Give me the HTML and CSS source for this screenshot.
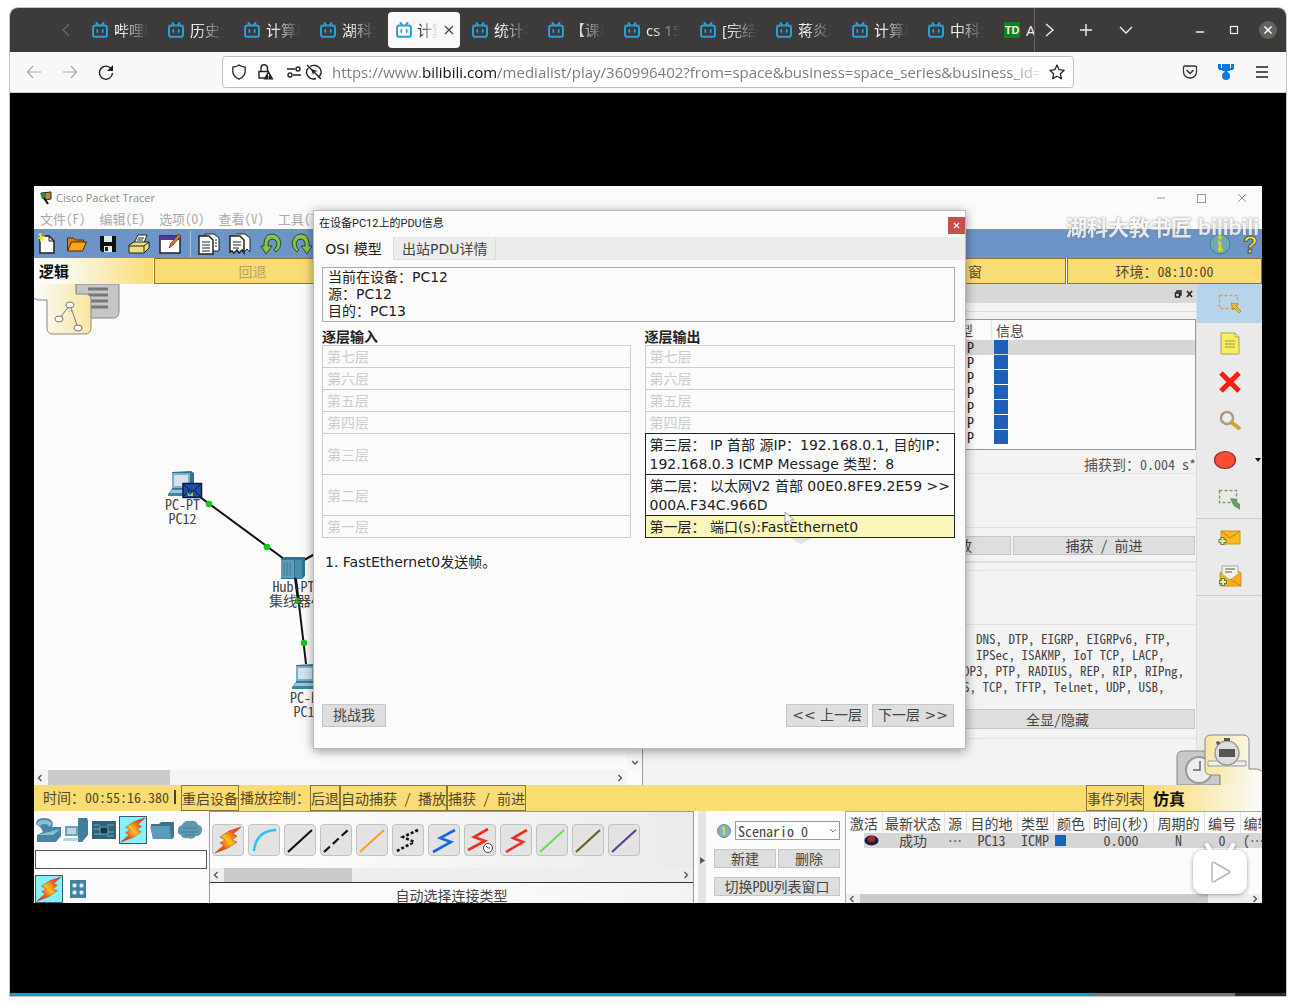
FILE: index.html
```html
<!DOCTYPE html>
<html lang="zh-CN">
<head>
<meta charset="utf-8">
<title>bilibili</title>
<link rel="stylesheet" href="styles.css">
</head>
<body>
<svg class="defs" width="0" height="0" aria-hidden="true">
  <defs>
    <symbol id="tv" viewBox="0 0 16 16"><path d="M4.5.8 6 3M11.5.8 10 3" stroke="#2b9fd9" stroke-width="2" stroke-linecap="round"/><rect x="1" y="3.4" width="14" height="11.4" rx="2.4" fill="none" stroke="#2b9fd9" stroke-width="2"/><path d="M5.3 8v2M10.7 8v2" stroke="#2b9fd9" stroke-width="1.8" stroke-linecap="round"/></symbol>
    <linearGradient id="fire" x1="0" y1="1" x2="1" y2="0"><stop offset="0" stop-color="#d91f10"/><stop offset=".3" stop-color="#f4661a"/><stop offset=".5" stop-color="#ffc21a"/><stop offset=".7" stop-color="#f4661a"/><stop offset="1" stop-color="#d91f10"/></linearGradient>
    <symbol id="bolt" viewBox="0 0 28 28"><path d="M27 1 15 5 6 11l5 3-5 3 4 2-9 8 13-5 9-6-5-2 5-4-4-2z" fill="url(#fire)" stroke="#a5320f" stroke-width=".5"/></symbol>
    <symbol id="pc" viewBox="0 0 28 26"><path d="M4 1 23 0 26 2v16H4z" fill="#2b7590"/><rect x="4" y="2" width="18" height="15" fill="#7fb0c6"/><rect x="6" y="4" width="14" height="11" fill="#d3e3ec"/><path d="M4 18h22l-1 7H0v-2z" fill="#3d86a3"/><path d="M4 19h20l-2 3H1z" fill="#9cc6d8"/></symbol>
    <linearGradient id="cream" x1="0" x2="1"><stop offset="0" stop-color="#fbfbfb"/><stop offset="1" stop-color="#f8e6a0"/></linearGradient>
    <linearGradient id="cream2" x1="0" x2="1"><stop offset="0" stop-color="#f8e6a0"/><stop offset="1" stop-color="#fbfbfb"/></linearGradient>
  </defs>
</svg>
<div class="browser">
  <nav class="tabs">
    <svg class="tabs-prev" width="10" height="14" viewBox="0 0 10 14"><path d="M8 1 2 7l6 6" fill="none" stroke="#6b6a68" stroke-width="1.3"/></svg>
    <button class="tab"><svg width="16" height="16"><use href="#tv"/></svg><span>哔哩哔</span></button>
    <button class="tab"><svg width="16" height="16"><use href="#tv"/></svg><span>历史记</span></button>
    <button class="tab"><svg width="16" height="16"><use href="#tv"/></svg><span>计算机</span></button>
    <button class="tab"><svg width="16" height="16"><use href="#tv"/></svg><span>湖科大</span></button>
    <button class="tab active"><svg width="16" height="16"><use href="#tv"/></svg><span>计算</span><svg width="10" height="10" viewBox="0 0 10 10"><path d="m1 1 8 8M9 1 1 9" stroke="#444" stroke-width="1.2"/></svg></button>
    <button class="tab"><svg width="16" height="16"><use href="#tv"/></svg><span>统计学</span></button>
    <button class="tab"><svg width="16" height="16"><use href="#tv"/></svg><span>【课程</span></button>
    <button class="tab"><svg width="16" height="16"><use href="#tv"/></svg><span>cs 15</span></button>
    <button class="tab"><svg width="16" height="16"><use href="#tv"/></svg><span>[完结</span></button>
    <button class="tab"><svg width="16" height="16"><use href="#tv"/></svg><span>蒋炎岩</span></button>
    <button class="tab"><svg width="16" height="16"><use href="#tv"/></svg><span>计算机</span></button>
    <button class="tab"><svg width="16" height="16"><use href="#tv"/></svg><span>中科大</span></button>
    <button class="tab cut"><b class="td">TD</b><i>A</i></button>
    <div class="tab-tools">
      <svg width="14" height="16" viewBox="0 0 14 16"><path d="m3 2 7 6-7 6" fill="none" stroke="#eee" stroke-width="1.4"/></svg>
      <svg width="14" height="14" viewBox="0 0 14 14"><path d="M7 1v12M1 7h12" stroke="#eee" stroke-width="1.4"/></svg>
      <svg width="14" height="14" viewBox="0 0 14 14"><path d="m1 4 6 6 6-6" fill="none" stroke="#eee" stroke-width="1.4"/></svg>
    </div>
    <div class="win-tools">
      <svg width="18" height="18" viewBox="0 0 18 18"><path d="M5 11h8" stroke="#eee" stroke-width="1.4"/></svg>
      <svg width="18" height="18" viewBox="0 0 18 18"><rect x="5.500" y="5.500" width="7" height="7" fill="none" stroke="#eee" stroke-width="1.2"/></svg>
      <svg width="18" height="18" viewBox="0 0 18 18"><circle cx="9" cy="9" r="9" fill="#63625f"/><path d="m5.500 5.500 7 7m0-7-7 7" stroke="#fff" stroke-width="1.5"/></svg>
    </div>
  </nav>
  <div class="navbar">
    <div class="nav-buttons">
      <svg width="16" height="16" viewBox="0 0 16 16"><path d="M15 8H1.500M7 2 1.500 8 7 14" fill="none" stroke="#aaa" stroke-width="1.2"/></svg>
      <svg width="16" height="16" viewBox="0 0 16 16"><path d="M1 8h13.500M9 2l5.500 6L9 14" fill="none" stroke="#aaa" stroke-width="1.2"/></svg>
      <svg width="16" height="16" viewBox="0 0 16 16"><path d="M13 4.500A6.500 6.500 0 1 0 14.500 9" fill="none" stroke="#222" stroke-width="1.4"/><path d="M15 1v6H9z" fill="#222"/></svg>
    </div>
    <div class="urlbar">
      <svg width="16" height="16" viewBox="0 0 16 16"><path d="M8 1c2 1.500 4 2 6.200 2.200V7c0 3.800-2.200 6.500-6.200 8.200C4 13.500 1.800 10.800 1.800 7V3.200C4 3 6 2.500 8 1z" fill="none" stroke="#222" stroke-width="1.300"/></svg>
      <svg class="lock" width="17" height="16" viewBox="0 0 17 16"><path d="M4 7V4a3 3 0 0 1 6.500 0v3M2 14.500V7.500h10" fill="none" stroke="#222" stroke-width="1.400"/><path d="M2 14h6" stroke="#222" stroke-width="1.400"/><path d="m11.500 6.500 5 9h-10z" fill="#222"/><path d="M11.500 10v2.500M11.500 13.500v1" stroke="#fff"/></svg>
      <svg class="perm" width="16" height="16" viewBox="0 0 16 16"><path d="M1 5h8M7 11h8" stroke="#222" stroke-width="1.400"/><circle cx="12" cy="5" r="2" fill="none" stroke="#222" stroke-width="1.400"/><circle cx="4" cy="11" r="2" fill="none" stroke="#222" stroke-width="1.400"/></svg>
      <svg width="18" height="16" viewBox="0 0 18 16"><path d="M5 2.500a7 6.500 0 0 1 8 11M3.500 4a7 6.500 0 0 0 7.500 10.500M2 1l14 14" fill="none" stroke="#222" stroke-width="1.400"/><path d="m6 5 7 2-4 1-1 3z" fill="#222"/></svg>
      <div class="url">https://www.<b>bilibili.com</b>/medialist/play/360996402?from=space&amp;business=space_series&amp;business_id=</div>
      <svg width="16" height="16" viewBox="0 0 16 16"><path d="m8 1 2.100 4.700 5.100.6-3.800 3.500 1 5L8 12.300l-4.400 2.500 1-5L.8 6.300l5.100-.6z" fill="none" stroke="#222" stroke-width="1.300" stroke-linejoin="round"/></svg>
    </div>
    <div class="nav-right">
      <svg width="16" height="16" viewBox="0 0 16 16"><path d="M3 2h10q1.500 0 1.500 1.500V8a6.500 6 0 0 1-13 0V3.500Q1.500 2 3 2z" fill="none" stroke="#333" stroke-width="1.300"/><path d="m4.500 6 3.500 3.500L11.500 6" fill="none" stroke="#333" stroke-width="1.500"/></svg>
      <svg width="16" height="16" viewBox="0 0 16 16"><path d="M0 0h3v5H0zM4 0h8v7H9.500v2h-3V7H4zM13 0h3v5h-3z" fill="#0b7bdc"/><path d="M1 4h14v2H1z" fill="#0b7bdc"/><circle cx="8" cy="12" r="4" fill="#0b7bdc"/></svg>
      <svg width="16" height="16" viewBox="0 0 16 16"><path d="M2 3h12M2 8h12M2 13h12" stroke="#222" stroke-width="1.400"/></svg>
    </div>
  </div>

  <main class="video">
    <div class="app">
      <header class="titlebar">
        <svg width="14" height="14" viewBox="0 0 14 14"><path d="M2 2 12 1v7l-6 1z" fill="#c08a2a" stroke="#222"/><path d="M1 2h6v6H3z" fill="#2f8b3a"/><path d="m5 7 4 6" stroke="#111" stroke-width="2"/></svg>
        <span>Cisco Packet Tracer</span>
        <svg class="winctl" width="92" height="10" viewBox="0 0 92 10"><path d="M1 5h8M82 1l8 8M90 1l-8 8" stroke="#999"/><rect x="41.500" y="1.500" width="8" height="8" fill="none" stroke="#999"/></svg>
      </header>
      <div class="menu"><a href="#f">文件(F)</a><a href="#e">编辑(E)</a><a href="#o">选项(O)</a><a href="#v">查看(V)</a><a href="#t">工具(T)</a></div>
      <div class="toolbar">
        <svg width="22" height="22" viewBox="0 0 18 22"><path d="M3 3h9l5 5v12H3z" fill="#fff" stroke="#222" stroke-width="1.500"/><path d="M12 3v5h5" fill="none" stroke="#222"/><path d="m4 0 1 3 3-1-2 3 2 3-3-1-2 2V6L0 5l3-1-2-3z" fill="#fbe33c"/></svg>
        <svg width="22" height="22" viewBox="0 0 21 22"><path d="M1 18V5h6l2 2h8v3" fill="#d98010" stroke="#4b2b08"/><path d="m1 18 4-9h15l-4 9z" fill="#fba51e" stroke="#4b2b08"/></svg>
        <svg width="22" height="22" viewBox="0 0 18 22"><path d="M1 3h16v16H3l-2-2z" fill="#111"/><path d="M5 3h8v6H5z" fill="#dfe6ee"/><path d="M5 13h8v6H5z" fill="#eee"/><path d="M6 14h3v4H6z" fill="#222"/></svg>
        <svg width="22" height="22" viewBox="0 0 22 22"><path d="m6 10 4-8h9l-3 8z" fill="#fff" stroke="#222"/><path d="m1 12 5-3h15v6l-5 5H1z" fill="#e9e27c" stroke="#222"/><path d="M1 13h15v6M16 13l5-4M10 5h6M9 7h6" stroke="#222" fill="none"/></svg>
        <svg width="22" height="22" viewBox="0 0 22 22"><rect x="1" y="3" width="20" height="17" fill="#fff" stroke="#222" stroke-width="1.500"/><path d="M1 3h20v4H1z" fill="#51389b"/><path d="m10 15 2-5 8-9 2 2-8 9z" fill="#d77a2b" stroke="#5a2c10" stroke-width=".7"/></svg>
        <i class="tsep"></i>
        <svg width="22" height="22" viewBox="0 0 22 22"><path d="M7 1h9l5 4v13H7z" fill="#fff" stroke="#222"/><path d="M1 3h10l4 4v14H1z" fill="#fff" stroke="#222" stroke-width="1.500"/><path d="M4 9h8M4 12h8M4 15h8M4 18h8M17 7h2M17 10h2M17 13h2" stroke="#222"/></svg>
        <svg width="22" height="22" viewBox="0 0 22 22"><path d="M7 1h9l5 4v14l-3-3-3 3" fill="#fff" stroke="#222"/><path d="M1 3h10l4 4v13l-2-3-3 3-2-3-3 3-2-2-2 1z" fill="#fff" stroke="#222" stroke-width="1.500"/><path d="M4 9h8M4 12h8M4 15h6" stroke="#222"/></svg>
        <svg width="22" height="22" viewBox="0 0 22 22"><path d="M1 13h3V10q1-9 8-9t9 9q0 5-5 9l-2-2q3-3 3-7-1-4-5-4-3 0-4 4v3h4l-6 8z" fill="#8cc152" stroke="#234d1c"/></svg>
        <svg width="22" height="22" viewBox="0 0 22 22"><path d="M21 13h-3V10q-1-9-8-9T1 10q0 5 5 9l2-2q-3-3-3-7 1-4 5-4 3 0 4 4v3h-4l6 8z" fill="#8cc152" stroke="#234d1c"/></svg>
      </div>
      <div class="locbar"><strong>逻辑</strong><button class="dim">回退</button><button aria-label="bar"></button><button>窗</button><button>环境：08:10:00</button></div>

      <div class="work">
        <section class="canvas">
          <svg class="corner" width="90" height="54" viewBox="0 0 90 54"><path d="M42 0h43v28q0 6-6 6H42z" fill="#c6c6c6" stroke="#888"/><path d="M54 5h20M54 11h20M54 17h20M54 23h20" stroke="#777" stroke-width="3"/><path d="M0 0h42v10h9q6 0 6 6v28q0 6-6 6H19q-6 0-6-6V16H4l-4-2z" fill="url(#cream)"/><path d="M0 14q2 2 4 2h9v28q0 6 6 6h32q6 0 6-6V16q0-6-6-6h-9V0" fill="none" stroke="#888"/><path d="m25 35 11-14 8 23" fill="none" stroke="#777"/><g fill="#fff" stroke="#777"><ellipse cx="36" cy="21" rx="4" ry="3"/><ellipse cx="25" cy="35" rx="4" ry="3"/><ellipse cx="44" cy="44" rx="4" ry="3"/></g></svg>
          <svg class="links" width="300" height="440" viewBox="34 284 300 440">
            <path d="m200 497 84 62M304 560l20-11M295 570l11 94" stroke="#111" stroke-width="2" fill="none"/>
            <use href="#pc" x="168" y="471" width="28" height="26"/><rect x="183" y="483.500" width="18.500" height="14" fill="#1c4fa6" stroke="#111a33" stroke-width="1.500"/><path d="m183 484 9 8 9-8M183 497l7-7M201 497l-7-7" fill="none" stroke="#0c1a3f"/><path d="m187 492 3 3 3-3v4h-5z" fill="#b7c92b"/>
            <path d="m281 559 4-2h20v19l-3 3h-21z" fill="#2b7590"/><path d="M281 560h13v18h-13z" fill="#5f9dbb"/><path d="M295 560h7v18h-7z" fill="#4b8dac"/><path d="M284 562v14M287 562v14M290 562v14" stroke="#3b7896"/>
            <path d="m295 578 3 23" stroke="#111" stroke-width="2"/>
            <use href="#pc" x="292" y="664" width="28" height="26"/>
            <g fill="#12c81a"><circle cx="209" cy="504" r="3.300"/><circle cx="267" cy="547" r="3.300"/><circle cx="298" cy="601" r="3.300"/><circle cx="304" cy="643" r="3.300"/></g>
          </svg>
          <div class="node n1">PC-PT<br>PC12</div>
          <div class="node n2">Hub-PT<br>集线器4</div>
          <div class="node n3">PC-PT<br>PC13</div>
          <div class="vscroll"><svg width="8" height="6" viewBox="0 0 8 6"><path d="m1 1 3 3 3-3" fill="none" stroke="#555" stroke-width="1.400"/></svg></div>
          <div class="hscroll"><svg width="6" height="8" viewBox="0 0 6 8"><path d="M4.500 1 1.500 4l3 3" fill="none" stroke="#555" stroke-width="1.400"/></svg><i></i><svg width="6" height="8" viewBox="0 0 6 8"><path d="m1.500 1 3 3-3 3" fill="none" stroke="#555" stroke-width="1.400"/></svg></div>
        </section>
        <section class="panel">
          <div class="phead"><svg width="20" height="8" viewBox="0 0 20 8"><path d="M1.500 3h4v4h-4zM3 3V1h4v4H6" fill="none" stroke="#222" stroke-width="1.400"/><path d="m13 1 5 6M18 1l-5 6" stroke="#222" stroke-width="1.600"/></svg></div>
          <div class="pgap"></div>
          <table class="events">
            <thead><tr><th>型</th><th>信息</th></tr></thead>
            <tbody>
              <tr class="sel"><td>P</td><td><i></i></td></tr><tr><td>P</td><td><i></i></td></tr><tr><td>P</td><td><i></i></td></tr><tr><td>P</td><td><i></i></td></tr><tr><td>P</td><td><i></i></td></tr><tr><td>P</td><td><i></i></td></tr><tr><td>P</td><td><i></i></td></tr>
            </tbody>
          </table>
          <div class="captured">捕获到：0.004 s*</div>
          <div class="pspace"></div>
          <div class="play"><button>放</button><button>捕获 / 前进</button></div>
          <div class="pspace two"></div>
          <pre class="protocols">  DNS, DTP, EIGRP, EIGRPv6, FTP,
  IPSec, ISAKMP, IoT TCP, LACP,
DP3, PTP, RADIUS, REP, RIP, RIPng,
S, TCP, TFTP, Telnet, UDP, USB,</pre>
          <button class="showall">全显/隐藏</button>
          <div class="pend"></div>
        </section>
        <aside class="side">
          <div class="cell on"><svg width="24" height="22" viewBox="0 0 24 22"><rect x="1.500" y="2.500" width="18" height="13" fill="none" stroke="#d9a23a" stroke-width="1.500" stroke-dasharray="3 2"/><path d="m13 10 7 1-2 2 5 5-2 2-5-5-1 2z" fill="#edb92e" stroke="#a77a1e" stroke-width=".7"/></svg></div>
          <div class="cell"><svg width="24" height="24" viewBox="0 0 24 24"><path d="M3 2h14l4 4v17H3z" fill="#f6ee5e" stroke="#aaa067"/><path d="M17 2v4h4z" fill="#fffde0" stroke="#aaa067"/><path d="M7 10h10M7 13h10M7 16h10" stroke="#9a9448"/></svg></div>
          <div class="cell"><svg width="24" height="24" viewBox="0 0 24 24"><path d="m3 3 18 18M21 3 3 21" stroke="#fa1d0b" stroke-width="5"/></svg></div>
          <div class="cell"><svg width="24" height="24" viewBox="0 0 24 24"><circle cx="9" cy="9" r="6" fill="#eee" stroke="#b09a86" stroke-width="2.500"/><path d="m13 13 9 7" stroke="#cba43c" stroke-width="4"/></svg></div>
          <div class="cell"><svg width="54" height="20" viewBox="0 0 54 20"><ellipse cx="17" cy="10" rx="10.500" ry="8.500" fill="#fd4b36" stroke="#8e2a20" stroke-width="1.200"/><path d="M47 8h6l-3 4z" fill="#111"/></svg></div>
          <div class="cell"><svg width="24" height="24" viewBox="0 0 24 24"><rect x="1.500" y="3.500" width="17" height="12" fill="none" stroke="#75a465" stroke-width="1.500" stroke-dasharray="3 2"/><path d="m12 11 7 1v3l3 2v6l-6-4-2-3z" fill="#6a9a68"/></svg></div>
          <div class="cell mail"><svg width="24" height="20" viewBox="0 0 24 20"><path d="M3 3h19v13H3z" fill="#fbb81c" stroke="#cf9420"/><path d="m3 3 9 7 10-7" fill="none" stroke="#b9831a"/><path d="M4.500 9v8M.500 13h8" stroke="#6d7a38" stroke-width="4"/><path d="M4.500 10v6M1.500 13h6" stroke="#e5edb0" stroke-width="2"/></svg></div>
          <div class="cell"><svg width="24" height="24" viewBox="0 0 24 24"><path d="m2 9 4-3h13l4 3v13H2z" fill="#f9ad1c" stroke="#cf9420"/><path d="M4 2h16v8l-8 6-8-6z" fill="#f7f3df" stroke="#aaa"/><path d="M7 5h10M7 8h7" stroke="#888" stroke-width="1.500"/><path d="m12 15 11 7" stroke="#b9831a"/><path d="M5 14v8M1 18h8" stroke="#6d7a38" stroke-width="4"/><path d="M5 15v6M2 18h6" stroke="#e5edb0" stroke-width="2"/></svg></div>
          <svg class="mode" width="86" height="51" viewBox="0 0 86 51"><path d="M1 51V23q0-6 6-6h37v34z" fill="#c9c9c9" stroke="#888"/><circle cx="23" cy="36" r="13" fill="#eee" stroke="#999" stroke-width="2"/><path d="M24 27v9h-7" fill="none" stroke="#666" stroke-width="1.500"/><path d="M29 6q0-5 5-5h33q6 0 6 6v28h9l4 2v14H44V41H35q-6 0-6-6z" fill="url(#cream2)"/><path d="M44 51V41H35q-6 0-6-6V7q0-6 6-6h32q6 0 6 6v28h8l5 2" fill="none" stroke="#888"/><path d="M32 27h38v5H32z" fill="#eee" stroke="#999"/><circle cx="51" cy="19" r="12" fill="#ddd" stroke="#999" stroke-width="1.500"/><path d="M43 15h16v8H43z" fill="#555"/><path d="M48 4h6v3h-6zM40 8l3-1 1 3-3 1z" fill="#555"/></svg>
        </aside>
      </div>

      <div class="timebar">
        <span>时间：00:55:16.380</span><i class="caret"></i>
        <button>重启设备</button><span class="ctl">播放控制：</span><button>后退</button><button>自动捕获 / 播放</button><button>捕获 / 前进</button>
        <div class="mode-end"><button>事件列表</button><strong>仿真</strong></div>
      </div>

      <div class="bottom">
        <section class="devices">
          <div class="drow">
            <svg width="26" height="26" viewBox="0 0 26 26"><path d="M1 7q0-6 8-6t9 6l-1 3h9v9l-5 6H2v-7l6-3-2-4z" fill="#4685a3"/><path d="M2 7q0-4 7-4t8 4l-3 3q0-3-5-3T6 10zM2 18h16l7-6" fill="#8cbcd0"/></svg>
            <svg width="26" height="26" viewBox="0 0 26 26"><path d="M15 1h9l1 3v14l-6 7h-4z" fill="#3f7f9e"/><path d="M2 9h13v10H2z" fill="#6aa2bb"/><path d="M4 11h9v6H4zM1 21h15l-2 3H0z" fill="#b5d4e0"/></svg>
            <svg width="26" height="26" viewBox="0 0 26 26"><path d="M1 4h24v18H1z" fill="#2d627c"/><path d="M3 8h6M3 12h6M3 17h7M16 8h7M17 15h6M16 19h7" stroke="#79a9be"/><path d="M9 10h8v7H9z" fill="#173442" stroke="#79a9be"/></svg>
            <span class="pick"><svg width="26" height="26"><use href="#bolt"/></svg></span>
            <svg width="26" height="26" viewBox="0 0 26 26"><path d="M2 7h8l2-2h13v15l-2 2H4z" fill="#39758f"/><path d="M1 9h20l1 13H4z" fill="#5c9bb7"/></svg>
            <svg width="26" height="26" viewBox="0 0 26 26"><path d="M5 8q3-5 8-4 6-1 8 4 5 1 4 6-1 5-6 5-3 4-8 2-6 1-7-3-4-1-3-5 0-4 4-5z" fill="#5f97b0"/><path d="M6 11h14M4 15h17M8 18h9" stroke="#417b95"/></svg>
          </div>
          <input type="text" aria-label="device">
          <div class="drow two"><span class="pick"><svg width="26" height="26"><use href="#bolt"/></svg></span><svg width="16" height="18" viewBox="0 0 16 18"><path d="M0 0h16v18H0z" fill="#3f83a3"/><path d="M3 4h3v3H3zM10 4h3v3h-3zM3 11h3v3H3zM10 11h3v3h-3z" fill="#fff" stroke="#cfe3ec"/></svg></div>
        </section>
        <section class="cables">
          <div class="crow">
            <button aria-label="auto"><svg width="28" height="28"><use href="#bolt"/></svg></button>
            <button aria-label="console"><svg width="28" height="28"><path d="M4 25Q6 5 26 4" fill="none" stroke="#29c5ea" stroke-width="2.500"/></svg></button>
            <button aria-label="straight"><svg width="28" height="28"><path d="M2 26 26 4" stroke="#111" stroke-width="2.200"/></svg></button>
            <button aria-label="cross"><svg width="28" height="28"><path d="M2 26 26 4" stroke="#111" stroke-width="2.200" stroke-dasharray="8 4"/></svg></button>
            <button aria-label="fiber"><svg width="28" height="28"><path d="M2 26 26 4" stroke="#f4a02a" stroke-width="2.200"/></svg></button>
            <button aria-label="phone"><svg width="28" height="28"><path d="M24 4 9 11l11 5L3 25" fill="none" stroke="#111" stroke-width="2.600" stroke-dasharray="3 2"/></svg></button>
            <button aria-label="coaxial"><svg width="28" height="28"><path d="M25 4 10 12l11 4L3 26" fill="none" stroke="#1668e0" stroke-width="2.600"/></svg></button>
            <button aria-label="dce"><svg width="28" height="28"><path d="M22 3 8 11l11 4L2 24" fill="none" stroke="#f0301e" stroke-width="2.600"/><circle cx="22" cy="22" r="4.500" fill="#fff" stroke="#444"/><path d="M20 20l2 2h2" fill="none" stroke="#444"/></svg></button>
            <button aria-label="dte"><svg width="28" height="28"><path d="M25 4 11 12l10 4L4 26" fill="none" stroke="#f0301e" stroke-width="2.600"/></svg></button>
            <button aria-label="octal"><svg width="28" height="28"><path d="M2 26 26 4" stroke="#6fdb55" stroke-width="2.200"/></svg></button>
            <button aria-label="iot"><svg width="28" height="28"><path d="M2 26 26 4" stroke="#6c611c" stroke-width="2.200"/></svg></button>
            <button aria-label="usb"><svg width="28" height="28"><path d="M2 26 26 4" stroke="#63389d" stroke-width="2.200"/></svg></button>
          </div>
          <div class="hscroll"><svg width="6" height="8" viewBox="0 0 6 8"><path d="M4.500 1 1.500 4l3 3" fill="none" stroke="#555" stroke-width="1.400"/></svg><i></i><svg width="6" height="8" viewBox="0 0 6 8"><path d="m1.500 1 3 3-3 3" fill="none" stroke="#555" stroke-width="1.400"/></svg></div>
          <div class="cname">自动选择连接类型</div>
        </section>
        <div class="split"><svg width="5" height="7" viewBox="0 0 5 7"><path d="m0 0 5 3.500L0 7z" fill="#555"/></svg></div>
        <section class="scenario">
          <div class="pickrow"><svg width="14" height="14" viewBox="0 0 14 14"><circle cx="7" cy="7" r="6.500" fill="#7eb0c6" stroke="#6f8d98"/><path d="M7 3v8M5 4l2-1" stroke="#d4dd4a" stroke-width="2"/></svg><select aria-label="Scenario"><option>Scenario 0</option></select><svg class="chev" width="8" height="6" viewBox="0 0 8 6"><path d="m1 1 3 3 3-3" fill="none" stroke="#777"/></svg></div>
          <div class="pair"><button>新建</button><button>删除</button></div>
          <button>切换PDU列表窗口</button>
        </section>
        <section class="pdus">
          <table>
            <colgroup><col class="w36"><col class="w63"><col class="w22"><col class="w51"><col class="w36"><col class="w36"><col class="w64"><col class="w51"><col class="w36"><col></colgroup>
            <thead><tr><th>激活</th><th>最新状态</th><th>源</th><th>目的地</th><th>类型</th><th>颜色</th><th>时间(秒)</th><th>周期的</th><th>编号</th><th>编辑</th></tr></thead>
            <tbody><tr><td class="act"><svg width="15" height="11" viewBox="0 0 15 11"><ellipse cx="7.500" cy="5.500" rx="7" ry="5" fill="#14203f"/><ellipse cx="7.500" cy="4" rx="4" ry="3" fill="#a52733"/></svg></td><td>成功</td><td>⋯</td><td>PC13</td><td>ICMP</td><td class="col"><i></i></td><td>0.000</td><td>N</td><td>0</td><td>(⋯</td></tr></tbody>
          </table>
          <div class="hscroll"><svg width="6" height="8" viewBox="0 0 6 8"><path d="M4.500 1 1.500 4l3 3" fill="none" stroke="#555" stroke-width="1.400"/></svg><i></i><svg width="6" height="8" viewBox="0 0 6 8"><path d="m1.500 1 3 3-3 3" fill="none" stroke="#555" stroke-width="1.400"/></svg></div>
        </section>
      </div>

      <svg class="help" width="56" height="26" viewBox="0 0 56 26"><circle cx="14" cy="13" r="10" fill="#6fa8ba" stroke="#48798c"/><path d="M14 11v8M12 19h5M12 11h2" stroke="#d9cf2a" stroke-width="3"/><circle cx="14" cy="6.500" r="2" fill="#d9cf2a"/><text x="37" y="22" class="q">?</text></svg>
      <div class="mark"><span>湖科大教书匠</span><em>bilibili</em></div>

      <div class="dialog" role="dialog">
        <div class="dtitle"><span>在设备PC12上的PDU信息</span><button aria-label="close"><svg width="7" height="7" viewBox="0 0 7 7"><path d="m1 1 5 5M6 1 1 6" stroke="#fff" stroke-width="1.200"/></svg></button></div>
        <div class="dtabs"><button class="on">OSI 模型</button><button>出站PDU详情</button></div>
        <div class="dbody">
          <div class="info">当前在设备：PC12<br>源：PC12<br>目的：PC13</div>
          <div class="layers">
            <div><h3>逐层输入</h3>
              <div class="layer off">第七层</div><div class="layer off">第六层</div><div class="layer off">第五层</div><div class="layer off">第四层</div><div class="layer off tall">第三层</div><div class="layer off tall">第二层</div><div class="layer off">第一层</div></div>
            <div><h3>逐层输出</h3>
              <div class="layer off">第七层</div><div class="layer off">第六层</div><div class="layer off">第五层</div><div class="layer off">第四层</div><div class="layer tall">第三层： IP 首部 源IP：192.168.0.1, 目的IP：<br>192.168.0.3 ICMP Message 类型：8</div><div class="layer tall">第二层： 以太网V2 首部 00E0.8FE9.2E59 &gt;&gt;<br>000A.F34C.966D</div><div class="layer cur">第一层： 端口(s):FastEthernet0</div></div>
          </div>
          <p class="note">1. FastEthernet0发送帧。</p>
          <div class="dfoot"><button>挑战我</button><button class="prev">&lt;&lt; 上一层</button><button>下一层 &gt;&gt;</button></div>
        </div>
        <svg class="cursor" width="32" height="36" viewBox="0 0 32 36"><path d="M6 27h22l-11 6z" fill="#e3e3e3"/><path d="M1 1v11l3-2 2 4 2-1-2-4h4z" fill="#fff" stroke="#999"/></svg>
      </div>

      <svg class="play-badge" width="56" height="52" viewBox="0 0 56 52"><path d="m15 2 4 7M41 2l-4 7" stroke="#fff" stroke-width="4" stroke-linecap="round"/><rect x="1" y="7" width="54" height="44" rx="10" fill="#fff"/><path d="M20 21q0-3 3-1l14 8q2 1 0 2l-14 8q-3 2-3-1z" fill="#fff" stroke="#bbb" stroke-width="1.600"/></svg>
    </div>
  </main>
  <div class="progress"><i></i><b></b></div>
</div>
</body>
</html>
```
FILE: styles.css
```css
* { box-sizing: border-box; }
body { margin: 0; padding: 8px 10px 10px; min-height: 100vh; display: flex; background: #fff; font: 14px/16px "Noto Sans Mono CJK SC", "Liberation Mono", "Noto Sans CJK SC", monospace; color: #444; }
svg { display: block; flex: none; }
button { font: inherit; color: inherit; padding: 0; margin: 0; border: 0; background: none; white-space: nowrap; }
.defs { position: absolute; }
.browser { flex: 1; min-width: 0; display: flex; flex-direction: column; border-radius: 8px 8px 0 0; box-shadow: 0 0 0 1px #c4c4c4; overflow: hidden; }

.tabs { height: 44px; flex: none; display: flex; align-items: center; background: #3d3b39; color: #f2f2f2; font: 15px/20px "Open Sans", "Noto Sans CJK SC", sans-serif; overflow: hidden; }
.tabs-prev { margin: 0 13px 0 51px; }
.tab { flex: none; width: 72px; height: 36px; margin-right: 4px; padding-left: 8px; display: flex; align-items: center; gap: 6px; border-radius: 4px; overflow: hidden; }
.tab span { width: 36px; overflow: hidden; text-align: left; -webkit-mask-image: linear-gradient(90deg, #000 20%, transparent 95%); mask-image: linear-gradient(90deg, #000 20%, transparent 95%); }
.tab.active { background: #f9f9fa; color: #444; gap: 5px; }
.tab.active span { width: 22px; }
.tab.cut { width: 39px; margin: 0; border-right: 1px solid #66645f; border-radius: 0; height: 44px; }
.tab i { font-style: normal; }
.td { flex: none; width: 16px; height: 16px; background: #14801f; font: bold 11px/16px "Liberation Sans", sans-serif; }
.tab-tools { display: flex; align-items: center; gap: 22px; margin-left: 8px; }
.tab-tools svg:last-child { margin-left: 4px; }
.win-tools { margin: 0 9px 0 auto; display: flex; gap: 16px; }

.navbar { height: 41px; flex: none; display: flex; align-items: center; background: #f8f8f8; border-bottom: 1px solid #ccc; }
.nav-buttons { display: flex; gap: 20px; width: 212px; padding-left: 16px; }
.urlbar { flex: 1; min-width: 0; height: 32px; display: flex; align-items: center; padding: 0 8px; background: #fff; border: 1px solid #bdbdbd; border-radius: 4px; }
.lock { margin: 0 12px 0 10px; }
.perm { margin-right: 3px; }
.url { flex: 1; min-width: 0; margin: 0 4px 0 9px; overflow: hidden; white-space: nowrap; font: 15px/20px "Open Sans", sans-serif; color: #7c7c7c; -webkit-mask-image: linear-gradient(90deg, #000 95%, transparent); mask-image: linear-gradient(90deg, #000 95%, transparent); }
.url b { font-weight: 400; color: #111; }
.nav-right { display: flex; gap: 20px; width: 212px; justify-content: flex-end; padding-right: 16px; }

.video { flex: 1; display: flex; align-items: center; background: #000; padding: 3px 24px 0; }
.app { position: relative; flex: 1; min-width: 0; background: #fbfbfb; overflow: hidden; }
.titlebar { height: 23px; display: flex; align-items: center; gap: 3px; padding: 0 14px 0 5px; color: #8b8b8b; font: 11px/16px "Open Sans", sans-serif; }
.winctl { margin-left: auto; }
.menu { height: 20px; display: flex; gap: 14px; padding-left: 6px; align-items: center; }
.menu a { color: #aaa; text-decoration: none; font-size: 13px; }
.toolbar { height: 29px; background: #6c94c7; display: flex; align-items: center; gap: 9px; padding-left: 1px; }
.tsep { width: 1px; height: 26px; background: #a9c1de; margin-right: -2px; }
.locbar { height: 26px; display: grid; grid-template-columns: 119px 197px 1fr 182px 195px; column-gap: 1px; background: #fbfbfb; }
.locbar strong { padding: 5px; color: #111; font-size: 15px; background: linear-gradient(90deg, #fbfbfb 20%, #f9dc74); }
.locbar button { background: #f9dc74; border: 1px solid #8d7430; color: #54482a; }
.locbar .dim { color: #b9a264; }

.work { display: grid; grid-template-columns: 609fr 554fr 65px; }
.canvas { position: relative; display: grid; grid-template: 1fr 15px / 1fr 15px; border-right: 1px solid #999; overflow: hidden; min-height: 501px; }
.corner, .links { position: absolute; left: 0; top: 0; }
.node { position: absolute; text-align: center; line-height: 14px; white-space: nowrap; color: #444; }
.n1 { left: 131px; top: 213px; }
.n2 { left: 235px; top: 295px; }
.n3 { left: 256px; top: 406px; }
.vscroll { grid-area: 1 / 2; display: flex; align-items: flex-end; justify-content: center; padding-bottom: 4px; background: #f7f7f7; }
.hscroll { display: flex; align-items: center; background: #eee; padding: 0 4px 0 3px; gap: 5px; }
.hscroll i { align-self: stretch; width: 122px; margin-right: auto; background: #cbcbcb; }
.canvas .hscroll { grid-area: 2 / 1; background: #f4f4f4; }

.panel { background: #f3f3f3; display: flex; flex-direction: column; min-width: 0; border-right: 1px solid #ddd; overflow: hidden; }
.phead { height: 19px; background: #d8d8d8; display: flex; align-items: center; justify-content: flex-end; padding-right: 2px; }
.pgap { height: 16px; background: linear-gradient(#f3f3f3 8px, #ddd 8px, #ddd 9px, #f3f3f3 9px); }
.events { width: 100%; height: 131px; border-collapse: collapse; background: #fbfbfb; border: 1px solid #999; display: block; }
.events tbody, .events thead { display: block; }
.events tr { display: grid; grid-template-columns: 348px 1fr; height: 15px; }
.events thead tr { height: 20px; }
.events th { font-weight: 400; text-align: left; padding: 0 0 0 4px; line-height: 20px; }
.events th:first-child, .events td:first-child { text-align: right; padding-right: 18px; border-right: 1px solid #e4e4e4; }
.events td { padding: 0 2px; line-height: 15px; color: #222; }
.events td:first-child { border: 0; }
.events td i { display: block; width: 14px; height: 14px; background: #1f5fb8; }
.events .sel { background: #d6d6d6; }
.captured { height: 24px; line-height: 29px; text-align: right; border-bottom: 1px solid #e2e2e2; color: #555; }
.pspace { height: 54px; border-bottom: 1px solid #e2e2e2; }
.play { height: 35px; padding: 8px 1px; display: grid; grid-template-columns: 367px 1fr; gap: 2px; border-bottom: 2px solid #ddd; }
.play button, .showall, .scenario button, .dfoot button { background: #dedede; border: 1px solid #c6c6c6; color: #444; line-height: 17px; }
.play button:first-child { text-align: right; padding-right: 38px; }
.two { height: 62px; background: linear-gradient(transparent 7px, #e2e2e2 7px, #e2e2e2 8px, transparent 8px); }
.protocols { margin: 0; padding: 6px 0 0 320px; height: 84px; font: 13px/16px "Noto Sans Mono CJK SC", "Liberation Mono", monospace; color: #444; }
.showall { height: 20px; margin-right: 1px; padding-left: 277px; text-align: center; }
.pend { height: 10px; border-bottom: 1px solid #e2e2e2; }

.side { background: #eaeaea; display: flex; flex-direction: column; position: relative; }
.cell { height: 39px; display: flex; align-items: center; justify-content: center; }
.cell.on { background: #b7d4ec; }
.cell:nth-child(5) { justify-content: flex-end; }
.cell.mail { border-top: 1px solid #ccc; }
.cell.mail + .cell { border-bottom: 1px solid #ccc; }
.mode { position: absolute; right: 0; bottom: 0; }

.timebar { height: 26px; display: flex; align-items: stretch; background: linear-gradient(90deg, #f9dc74 91%, #fbfbfb); line-height: 24px; padding-left: 9px; color: #54482a; white-space: nowrap; }
.timebar button { border: 1px solid #8d7430; }
.caret { width: 2px; height: 14px; margin: 5px 5px 0; background: #4d4020; }
.ctl { margin-left: 1px; }
.mode-end { margin-left: auto; display: flex; gap: 9px; padding-right: 77px; }
.mode-end strong { color: #111; font-size: 16px; line-height: 26px; }

.bottom { height: 92px; display: grid; grid-template-columns: 175px 485px 12px 139px 1fr; }
.devices { display: flex; flex-direction: column; padding: 4px 2px 0 1px; }
.drow { height: 30px; display: flex; align-items: center; gap: 2px; }
.pick { width: 28px; height: 28px; border: 1px solid #35606b; background: #86f1fb; flex: none; }
.devices input { height: 19px; margin: 5px 0 6px; padding: 0 4px; border: 1px solid #555; background: #fff; width: 100%; }
.drow.two { height: 28px; gap: 7px; background: none; }
.cables { border: 1px solid #999; border-bottom: 0; display: flex; flex-direction: column; background: linear-gradient(90deg, #fbfbfb 20%, #ebebeb); }
.crow { height: 56px; display: flex; gap: 4px; align-items: center; padding-left: 2px; }
.crow button { width: 32px; height: 32px; border: 1px solid #c1c1c1; border-radius: 4px; background: #e3e3e3; display: grid; place-items: center; }
.cables .hscroll { height: 14px; }
.cables .hscroll i { width: 128px; }
.cname { flex: 1; border-top: 1px solid #333; text-align: center; padding-top: 4px; background: linear-gradient(90deg, #fbfbfb 50%, #f3f3f3); }
.split { background: linear-gradient(90deg, #fbfbfb 4px, #e5e5e5 4px); display: flex; align-items: center; justify-content: flex-end; padding: 6px 1px 0 0; }
.scenario { padding: 10px 5px 0 8px; display: flex; flex-direction: column; gap: 9px; }
.pickrow { position: relative; display: flex; align-items: center; gap: 4px; padding-left: 3px; height: 19px; }
.pickrow select { flex: 1; height: 19px; appearance: none; border: 1px solid #999; border-radius: 0; background: #fff; font: inherit; color: #444; padding: 0 2px; min-width: 0; }
.chev { position: absolute; right: 3px; top: 7px; }
.pair { display: grid; grid-template-columns: 1fr 1fr; gap: 2px; }
.scenario button { height: 19px; }
.pdus { border-left: 1px solid #aaa; border-top: 1px solid #aaa; overflow: hidden; display: flex; flex-direction: column; min-width: 0; }
.pdus table { width: 100%; table-layout: fixed; border-collapse: collapse; white-space: nowrap; }
.w36 { width: 36px; } .w63 { width: 62px; } .w22 { width: 22px; } .w51 { width: 51px; } .w64 { width: 64px; }
.pdus th { height: 21px; padding: 0; font-weight: 400; border-right: 1px solid #e2e2e2; }
.pdus td { height: 15px; line-height: 15px; padding: 0; text-align: center; background: #d6d6d6; }
.pdus th:last-child, .pdus td:last-child { text-align: left; padding-left: 3px; overflow: hidden; }
.pdus .act { background: linear-gradient(90deg, transparent 50%, #d6d6d6 50%); padding-left: 18px; }
.pdus .col i { display: block; width: 11px; height: 11px; margin-left: 2px; background: #1465c0; }
.pdus .hscroll { margin-top: auto; height: 9px; }
.pdus .hscroll i { width: 348px; }

.help { position: absolute; right: 0; top: 45px; }
.q { font: bold 24px "Liberation Sans", sans-serif; fill: #f2e72c; stroke: #555; stroke-width: 1px; }
.mark { position: absolute; right: 3px; top: 24px; display: flex; gap: 6px; align-items: center; color: #f6f6f6; font: bold 21px/32px "Noto Sans CJK SC", sans-serif; text-shadow: 0 0 3px #777; opacity: .85; }
.mark em { font: bold 23px/32px Lato, sans-serif; }

.dialog { position: absolute; left: 279px; right: 296px; top: 24px; background: #fbfbfb; border: 1px solid #bbb; box-shadow: 0 2px 10px rgba(0,0,0,.4); font: 14px/19px "DejaVu Sans", "Noto Sans CJK SC", sans-serif; color: #222; }
.dtitle { height: 26px; display: flex; align-items: center; justify-content: space-between; padding-left: 5px; font: 11px/16px Roboto, "Noto Sans CJK SC", sans-serif; }
.dtitle button { width: 17px; height: 17px; margin: 2px 0 0; background: #c9504a; display: grid; place-items: center; }
.dtabs { height: 23px; background: #ececec; display: flex; }
.dtabs button { padding: 0 8px; border: 1px solid #ddd; border-top-color: #e4e4e4; line-height: 20px; color: #444; }
.dtabs .on { background: #fbfbfb; border-color: #fbfbfb; color: #222; width: 79px; }
.dbody { padding: 7px 10px 21px 8px; }
.info { border: 1px solid #aaa; padding: 1px 5px; line-height: 17px; }
.layers { display: grid; grid-template-columns: 1fr 1fr; gap: 14px; }
h3 { margin: 7px 0 0; font-size: 14px; line-height: 16px; }
.layer { height: 23px; margin-bottom: -1px; padding: 2px 4px 0; border: 1px solid #222; white-space: nowrap; position: relative; z-index: 1; }
.layer.off { color: #ccc; border-color: #ccc; z-index: 0; }
.tall { height: 42px; }
.tall.off { line-height: 38px; }
.cur { background: #fbf6bb; }
.note { margin: 16px 3px 0; height: 19px; }
.dfoot { display: flex; gap: 4px; margin-top: 132px; padding-right: 1px; }
.dfoot button { height: 23px; padding: 0 5px; }
.dfoot button:first-child { padding: 0 10px; }
.dfoot .prev { margin-left: auto; }
.cursor { position: absolute; left: 470px; top: 300px; z-index: 2; }
.play-badge { position: absolute; right: 14px; bottom: 8px; filter: drop-shadow(0 1px 2px rgba(0,0,0,.35)); }

.progress { height: 3px; flex: none; display: flex; background: #2b2b2b; }
.progress i { width: 85%; background: #0c9fdb; }
.progress b { width: 11%; background: #777; }
```
